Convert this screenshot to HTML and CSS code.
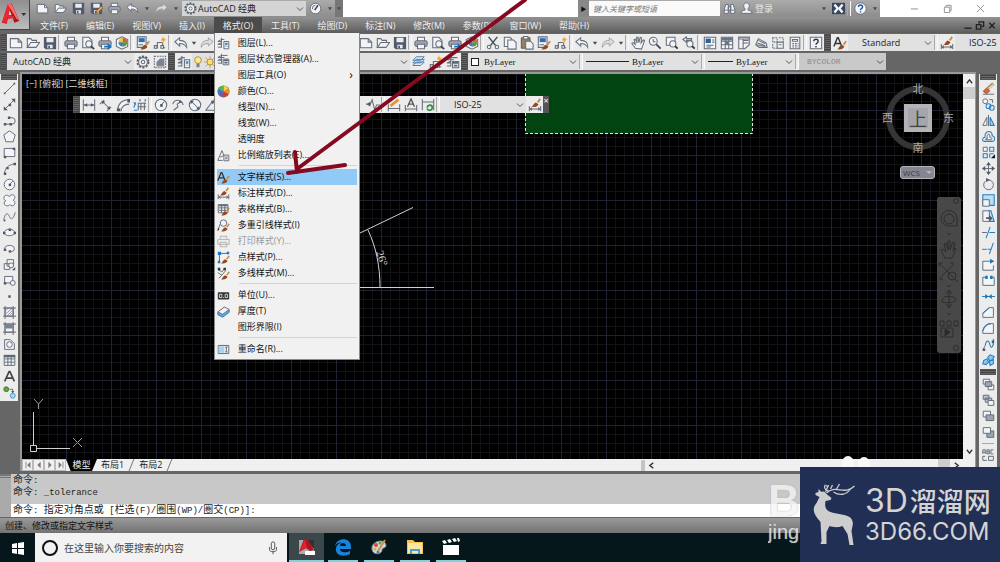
FILE: index.html
```html
<!DOCTYPE html>
<html lang="zh-CN">
<head>
<meta charset="utf-8">
<meta name="viewport" content="width=device-width, initial-scale=1">
<title>AutoCAD 经典</title>
<link rel="stylesheet" href="styles.css">
</head>
<body>
<svg class="sprite" aria-hidden="true">
  <symbol id="new" viewBox="0 0 16 16"><path class="f s" d="M1.500 13.500V3h9l4 4v6.500z"/><path class="s" d="M10.500 3v4h4"/></symbol>
  <symbol id="open" viewBox="0 0 16 16"><path class="f s" d="M1.500 13V3h4l1.500 2h5v2.500"/><path class="f s" d="M1.500 13l4-5.500h10L11.500 13z"/></symbol>
  <symbol id="save" viewBox="0 0 16 16"><path fill="#515b6d" d="M1 1h14v14H3l-2-2z"/><path fill="#e9edf2" d="M4 2h8v5H4zM5 10h6v4H5z"/><path fill="#515b6d" d="M6 11h2v3H6z"/></symbol>
  <symbol id="saveas" viewBox="0 0 16 16"><use href="#save"/><path d="M7 14l1-3 6-6 2 2-6 6z" fill="#f0b35a" stroke="#774619"/></symbol>
  <symbol id="print" viewBox="0 0 16 16"><path class="f s" d="M4 6V1.500h8V6"/><rect class="s" x="1" y="5.500" width="14" height="6.500" rx="2" fill="#9da4af"/><path class="f s" d="M4 9.500h8V14.500H4z"/></symbol>
  <symbol id="preview" viewBox="0 0 16 16"><path class="f s" d="M2 13.500V1.500h7l3.500 3.500v8.500z"/><circle class="f s" cx="9" cy="9" r="3.500"/><path d="M11.500 11.500l3.500 3.500" stroke="#3e4654" stroke-width="2"/></symbol>
  <symbol id="publish" viewBox="0 0 16 16"><use href="#print"/><path fill="#1373c2" d="M7 11h4V8l5 4.500-5 3.500v-3H7z"/></symbol>
  <symbol id="cube" viewBox="0 0 16 16"><path class="f s" d="M1.500 4L8 1l6.500 3v8L8 15l-6.500-3z"/><circle cx="9" cy="7" r="5" fill="#e9c94d"/><path d="M9 7V2a5 5 0 0 1 5 5z" fill="#d95c3c"/><path d="M9 7h5a5 5 0 0 1-5 5z" fill="#4b9b4e"/><path d="M9 7v5a5 5 0 0 1-5-5z" fill="#377fc0"/></symbol>
  <symbol id="match" viewBox="0 0 16 16"><path class="f s" d="M1.500 1h10v12h-10z"/><path fill="#2d6fae" d="M3 2.500h7V7H3z"/><path class="s" d="M3 10h5"/><use href="#brush"/></symbol>
  <symbol id="brush" viewBox="0 0 16 16"><path d="M12 10l3-4" stroke="#c88642" stroke-width="2"/><path d="M5 15c2-.5 2-4 5-5l3 2c-1 3-5 4-8 3z" fill="#944a20"/></symbol>
  <symbol id="block" viewBox="0 0 16 16"><path class="s" d="M1 13.500h4V7.500h6v6h3"/><path class="f s" d="M1.500 11h3v3h-3zM9 11h3v3H9z"/><path fill="#f2a123" d="M12 0L9 5h2.500L10 9l5-6h-3z"/></symbol>
  <symbol id="undo" viewBox="0 0 16 16"><path class="f s" d="M1 6.500L6.500 2v3C12 5 15 8 14.500 13 13 10 10.500 8.500 6.500 8.500v3z"/></symbol>
  <symbol id="redo" viewBox="0 0 16 16"><path fill="#ddd" stroke="#999da3" d="M15 6.500L9.500 2v3C4 5 1 8 1.500 13 3 10 5.500 8.500 9.500 8.500v3z"/></symbol>
  <symbol id="caret" viewBox="0 0 8 16"><path fill="#444b56" d="M1.500 6.500h5L4 10z"/></symbol>
  <symbol id="gear" viewBox="0 0 16 16"><circle cx="8" cy="8" r="6.300" fill="none" stroke="#5a616e" stroke-width="2.200" stroke-dasharray="2.500 1.450"/><circle class="f s" cx="8" cy="8" r="5"/><circle class="s" cx="8" cy="8" r="2"/></symbol>
  <symbol id="gauge" viewBox="0 0 16 16"><circle class="f s" cx="8" cy="8" r="6.500"/><path d="M7 10l4-6" stroke="#424958" stroke-width="2"/><path class="s" d="M4 9l1-4 3-1"/></symbol>
  <symbol id="region" viewBox="0 0 16 16"><path class="s" stroke-dasharray="2 1" d="M1.500 1.500h13v13h-13z"/><path fill="#7b8492" d="M4 8l4-4h5v9H4z"/></symbol>
  <symbol id="cut" viewBox="0 0 16 16"><path d="M3 1l8 10M13 1L5 11" stroke="#4b5363" stroke-width="1.800"/><circle class="s" cx="3.500" cy="12.500" r="2"/><circle class="s" cx="12.500" cy="12.500" r="2"/></symbol>
  <symbol id="copy" viewBox="0 0 16 16"><path class="f s" d="M1.500 12V1.500H8l2 2V12z"/><path class="f s" d="M5.500 15V4.500H12l3 3V15z"/></symbol>
  <symbol id="paste" viewBox="0 0 16 16"><path fill="#958064" stroke="#5a5147" d="M1.500 2h10v12h-10z"/><path class="f s" d="M4 .500h5v3H4zM6.500 6H12l3 3v6H6.500z"/></symbol>
  <symbol id="hand" viewBox="0 0 16 16"><path class="f s" d="M5 14L1 8.500 2.500 7.500 5 9.500 3.500 4 5 3.500 7 8 6.500 1.500H8L9 7.500l1.500-6L12 2l-.5 6L14 4.500l1.500.5-2 6-1.500 4z"/></symbol>
  <symbol id="zoom" viewBox="0 0 16 16"><circle class="f s" cx="6" cy="6" r="4.500"/><path class="s" d="M6 3.500v3h2.500"/><path d="M9.500 9.500l5 5" stroke="#3e4654" stroke-width="2"/></symbol>
  <symbol id="zoomwin" viewBox="0 0 16 16"><path class="f s" d="M1.500 1.500h10v9h-10z"/><circle class="f s" cx="9" cy="9" r="3.500"/><path d="M11.500 11.500l3 3" stroke="#333" stroke-width="2"/></symbol>
  <symbol id="zoomprev" viewBox="0 0 16 16"><path class="f s" d="M1 4l4-3v2h6v2H5v2z"/><circle class="f s" cx="9" cy="9" r="3.500"/><path d="M11.500 11.500l3 3" stroke="#333" stroke-width="2"/></symbol>
  <symbol id="props" viewBox="0 0 16 16"><path class="f s" d="M1.500 1.500h13v13h-13z"/><path fill="#2b6399" d="M3 3h6v5H3z"/><path class="s" d="M10.500 4.500H13M10.500 7H13M4 10.500h8M4 12.500h5"/></symbol>
  <symbol id="grid" viewBox="0 0 16 16"><path class="f s" d="M1.500 1.500h13v13h-13zM6 2v12M10 2v12M2 6h12M2 10h12"/><path fill="#697484" d="M2 2h12v3H2zM6 6h4v4H6z"/></symbol>
  <symbol id="palette" viewBox="0 0 16 16"><path class="f s" d="M2 1.500h12V10L9 14.500H2zM7 2v12M7 5h6M7 8h6"/><path class="f s" d="M2 1.500h12v2H2z"/></symbol>
  <symbol id="sheets" viewBox="0 0 16 16"><path class="f s" d="M2 10l3-7 9 5 1 5H6z"/><path d="M3 10l10 2M4 8l9 3M5 5l8 4" class="s"/></symbol>
  <symbol id="markup" viewBox="0 0 16 16"><path class="s" stroke-dasharray="2 1" d="M2 2h5v5H2zM9 2h5v5M2 9v5h5"/><path class="f s" d="M7 7h7v7H7zM9 10h3"/></symbol>
  <symbol id="calc" viewBox="0 0 16 16"><path class="f s" d="M2.500 1.500h11v13h-11zM5 4h6v2H5z"/><path class="s" stroke-dasharray="2 1" d="M5 8.500h7M5 10.500h7M5 12.500h7"/></symbol>
  <symbol id="help" viewBox="0 0 16 16"><path class="f s" d="M1.500 1.500h13v13h-13z"/><path d="M5.500 6c0-3 5-3 5 0 0 2-2.500 2-2.500 4M8 11.500v1.500" fill="none" stroke="#303743" stroke-width="1.600"/></symbol>
  <symbol id="helpround" viewBox="0 0 16 16"><circle cx="8" cy="8" r="7" fill="#f7f9fc" stroke="#5d6470"/><path d="M5.500 6c0-3 5-3 5 0 0 2-2.500 2-2.500 4M8 11.500v1.500" fill="none" stroke="#1d57a6" stroke-width="1.800"/></symbol>
  <symbol id="textstyle" viewBox="0 0 16 16"><path d="M1 12L5 2h1l4 10M2.500 8.500H8" fill="none" stroke="#333" stroke-width="1.600"/><use href="#brush"/></symbol>
  <symbol id="dimstyle" viewBox="0 0 16 16"><path d="M1.500 9v6M14.500 9v6M2 12.500h12M4.500 11L2 12.500 4.500 14M11.500 11l2.500 1.500L11.500 14" class="s"/><path d="M11 5l3-4" stroke="#c88642" stroke-width="2"/><path d="M4 10c2-.5 2-4 5-5l3 2c-1 3-5 4-8 3z" fill="#944a20"/></symbol>
  <symbol id="layers" viewBox="0 0 16 16"><path class="s" d="M1 5.500L5.500 3H9M1 9l4.500-2M1 12.500h5M5.500 1v12M1 5.500h5M1 9h5"/><path class="f s" d="M8.500 5.500h6v9h-6z"/><path fill="#438ac4" d="M10 7h3v3h-3zM10 11h1v1h-1zM12 11h1v1h-1z"/></symbol>
  <symbol id="layerstate" viewBox="0 0 16 16"><path class="s" d="M1 5.500L5.500 3H13M1 9l4.500-2M1 12.500h5M5.500 1v12M1 5.500h8M1 9h5"/><path class="f s" d="M7.500 7.500h7v7h-7z"/><path fill="#59677a" d="M8 8h6v2H8zM9 11h4v2H9z"/></symbol>
  <symbol id="stack" viewBox="0 0 16 16"><path fill="#dceaf5" stroke="#4175a1" d="M1 12l4-4h9l-4 4zM1 9l4-4h9l-4 4zM1 6l4-4h9l-4 4z"/></symbol>
  <symbol id="bulb" viewBox="0 0 16 16"><circle cx="8" cy="5.500" r="4.500" fill="#ffe78b" stroke="#927b38"/><path fill="#758090" d="M6 10h4v5H6z"/></symbol>
  <symbol id="sun" viewBox="0 0 16 16"><path d="M8 0v16M0 8h16M2 2l12 12M14 2L2 14" stroke="#b4923b"/><circle cx="8" cy="8" r="4" fill="#ffdf67" stroke="#98803b"/></symbol>
  <symbol id="scale" viewBox="0 0 16 16"><path class="f s" d="M1 14L6 2l4 9M1 14h6M4 10l5-2"/><path class="f s" d="M8.500 7.500h6v7h-6z"/><path class="s" d="M10 10h3M10 12h3"/></symbol>
  <symbol id="wheel" viewBox="0 0 16 16"><circle cx="8" cy="8" r="7.500" fill="#777"/><path d="M8 8V1a7 7 0 0 1 6 3.500z" fill="#f3d33c"/><path d="M8 8l6-3.500a7 7 0 0 1 0 7z" fill="#f28b2a"/><path d="M8 8l6 3.500A7 7 0 0 1 8 15z" fill="#cf3c35"/><path d="M8 8v7a7 7 0 0 1-6-3.500z" fill="#884cb0"/><path d="M8 8l-6 3.500a7 7 0 0 1 0-7z" fill="#337ac9"/><path d="M8 8L2 4.500A7 7 0 0 1 8 1z" fill="#5bb548"/></symbol>
  <symbol id="tablestyle" viewBox="0 0 16 16"><path class="f s" d="M1.500 2h12v10h-12zM2 6h12M2 9h12M5.500 3v9M9.500 3v9"/><path fill="#636f80" d="M2 2h11v2H2z"/><use href="#brush"/></symbol>
  <symbol id="leaderstyle" viewBox="0 0 16 16"><path class="s" d="M1 14l3-8"/><path fill="#333" d="M1 15V11l2 1z"/><circle class="f s" cx="8" cy="5" r="4"/><use href="#brush"/></symbol>
  <symbol id="printgray" viewBox="0 0 16 16"><path fill="#eee" stroke="#aaa" d="M4 5V1.500h8V5M1 5.500h14v6H1zM4 9h8v5.500H4z"/></symbol>
  <symbol id="pointstyle" viewBox="0 0 16 16"><path class="s" d="M3 13V3h11"/><path fill="#1d77c5" d="M1 1h4v4H1zM12 1h3v3h-3zM1 12h3v3H1z"/><use href="#brush"/></symbol>
  <symbol id="mlstyle" viewBox="0 0 16 16"><path class="s" d="M1 3l5 3 3-4M1 7l5 3 5-6M2 14l4-4"/><path fill="#333" d="M1 1h3v3H1zM8 1h3v3H8z"/><use href="#brush"/></symbol>
  <symbol id="units" viewBox="0 0 16 16"><rect x="1" y="4" width="14" height="9" rx="1" fill="#343434"/><path fill="none" stroke="#eee" d="M3 6.500h3v4H3zM10 6.500h3v4h-3zM7.500 10.500h1"/></symbol>
  <symbol id="thick" viewBox="0 0 16 16"><path fill="#65aadb" stroke="#266c9f" d="M1 9l8-6 6 3v3l-8 6-6-3z"/><path class="f s" d="M1 8.500L9 2.500l6 3-8 6z"/></symbol>
  <symbol id="rename" viewBox="0 0 16 16"><path class="f s" d="M1.500 3h13v10h-13z"/><path fill="#a7d2f1" d="M2 4h7v8H2z"/><path class="s" d="M10 5h3M10 11h3M11.500 5v6"/></symbol>
  <symbol id="line" viewBox="0 0 16 16"><path class="s" d="M2 14L14 2"/><path class="d" d="M1 13h2v2H1zM13 1h2v2h-2z"/></symbol>
  <symbol id="xline" viewBox="0 0 16 16"><path class="s" d="M1 15L15 1"/><path class="d" d="M1 15v-5l5 5zM15 1h-5l5 5zM7 7h3v3H7z"/></symbol>
  <symbol id="pline" viewBox="0 0 16 16"><path class="s" d="M2 12.500h9a4 4 0 0 0 0-8H8"/><path class="d" d="M1 11h3v3H1zM6 3h3v3H6zM8 11h3v3H8z"/></symbol>
  <symbol id="polygon" viewBox="0 0 16 16"><path class="f s" d="M8 1l7 5-2.500 8.500h-9L1 6z"/></symbol>
  <symbol id="rect" viewBox="0 0 16 16"><path class="f s" d="M1.500 3h13v10h-13z"/><path class="d" d="M1 12h3v3H1zM12 2h3v3h-3z"/></symbol>
  <symbol id="arc" viewBox="0 0 16 16"><path class="s" d="M2 14C2 8 7 3 14 2.500"/><path class="d" d="M1 13h3v3H1zM13 1h3v3h-3zM4 6h3v3H4z"/></symbol>
  <symbol id="circle" viewBox="0 0 16 16"><circle class="f s" cx="8" cy="8" r="6.500"/><path class="s" d="M8 8l4-4"/><path class="d" d="M7 7h3v3H7z"/></symbol>
  <symbol id="cloud" viewBox="0 0 16 16"><path class="f s" d="M8 3.500C9-.5 15 .5 14.500 4.500 14.500 6 13.500 7 12.500 7.500 16 9 15 14.500 11.500 14.500 10 14.500 9 14 8.500 13 6.500 16 1 14.500 1.500 11 1.500 9.500 2.500 8.500 3.500 8.500 0 7 .5 1.500 4.500 1.500 6 1.500 7.500 2.500 8 3.500z"/></symbol>
  <symbol id="spline" viewBox="0 0 16 16"><path class="s" d="M1 13c1-10 5-10 7-5s5 3 7-5"/><path class="d" d="M1 12h2v2H1z"/></symbol>
  <symbol id="ellipse" viewBox="0 0 16 16"><ellipse class="f s" cx="8" cy="8" rx="6.500" ry="4"/><path class="d" d="M0 7h3v3H0zM13 7h3v3h-3zM7 3h3v3H7z"/></symbol>
  <symbol id="ellarc" viewBox="0 0 16 16"><path class="f s" d="M2 8c0-5 12-5 12 0 0 3-2 4-6 4"/><path class="d" d="M1 8h3v3H1zM7 10h3v3H7z"/></symbol>
  <symbol id="insert" viewBox="0 0 16 16"><path class="f s" d="M5 2h8v8H5zM1.500 7h7v7h-7z"/><circle class="f s" cx="10" cy="9" r="3"/><path class="d" d="M11 15h4v-4z"/></symbol>
  <symbol id="makeblock" viewBox="0 0 16 16"><path class="f s" d="M2 3h10v8H2z"/><circle class="f s" cx="12" cy="11" r="3"/><path class="d" d="M1 10h3v3H1z"/></symbol>
  <symbol id="dot" viewBox="0 0 16 16"><path class="d" d="M6.500 6.500h3v3h-3z"/></symbol>
  <symbol id="hatch" viewBox="0 0 16 16"><path class="f s" d="M2.500 2.500h10v10h-10zM0 2.500h16M0 12.500h16M2.500 0v16M12.500 0v16"/><path stroke="#798490" d="M3 6l4-4M3 10l9-8M5 12l8-8M8 12l4-4"/></symbol>
  <symbol id="gradient" viewBox="0 0 16 16"><path class="f s" d="M2.500 2.500h10v10h-10zM0 2.500h16M0 12.500h16M2.500 0v16M12.500 0v16"/><path fill="#78838e" d="M3 3h9v5H3z"/></symbol>
  <symbol id="regionshape" viewBox="0 0 16 16"><path class="f s" d="M2 14V2h7l5 5v7z"/><circle class="f s" cx="8" cy="8" r="3.500"/></symbol>
  <symbol id="table" viewBox="0 0 16 16"><path class="f s" d="M1.500 2h13v12h-13zM2 6h12M2 10h12M6 3v11M10 3v11"/><path fill="#5d6877" d="M1 1h14v3H1z"/></symbol>
  <symbol id="mtext" viewBox="0 0 16 16"><path d="M2 14L7.500 2h1L14 14M4.500 10h7" fill="none" stroke="#444" stroke-width="2"/></symbol>
  <symbol id="addsel" viewBox="0 0 16 16"><circle cx="4" cy="4" r="3" fill="#65a63d" stroke="#376c21"/><circle cx="12" cy="12" r="3" fill="#a4d9fa" stroke="#328bcb"/><path class="s" d="M8 4h4v4"/><path class="d" d="M10 6h4l-2 3z"/></symbol>
  <symbol id="dlin" viewBox="0 0 16 16"><path class="s" d="M1.500 1.500v13M14.500 1.500v13M2 8h12"/><path class="d" d="M2 8l4-2v4zM14 8l-4-2v4z"/></symbol>
  <symbol id="dali" viewBox="0 0 16 16"><path class="s" d="M1 7l5-5M9 15l5-5M4 4l8 8"/><path class="d" d="M3 3l4 1-3 3zM13 13l-4-1 3-3z"/></symbol>
  <symbol id="darc" viewBox="0 0 16 16"><path class="f s" d="M2 14C2 7 7 2 14 2M6 15c0-5 4-8 9-8"/><path class="d" d="M1 12h4v3H1zM13 1h3v4h-3z"/></symbol>
  <symbol id="dord" viewBox="0 0 16 16"><path class="s" d="M6 14V6h9M9 6v8M6 10h9M13 5v9"/><path class="b" d="M1 14h4M8 1v3M14 1v3M1 5l2 3M3 5l-2 6"/></symbol>
  <symbol id="djog" viewBox="0 0 16 16"><path class="s" d="M2 7c2-6 10-6 12 1M3 14l5-4-1-3 4-3"/><path class="d" d="M10 2l3 3-4 1z"/></symbol>
  <symbol id="ddia" viewBox="0 0 16 16"><circle class="f s" cx="8" cy="8" r="6.500"/><path class="s" d="M4 4l8 8"/><path class="d" d="M3 3h4L3 7zM13 13H9l4-4z"/></symbol>
  <symbol id="dang" viewBox="0 0 16 16"><path class="s" d="M14 14H1L10 2M8 4c4 2 5 5 5 9"/><path class="d" d="M7 3l4 1-3 3z"/></symbol>
  <symbol id="dbreak" viewBox="0 0 16 16"><path class="s" d="M0 7h5l2-5 3 12 2-6h4"/><path class="d" d="M1 7l4-3v6z"/></symbol>
  <symbol id="dedit" viewBox="0 0 16 16"><path class="s" d="M1.500 7v8M14.500 7v8M2 12h12"/><path d="M4 9l9-7" stroke="#e09531" stroke-width="3"/></symbol>
  <symbol id="dtext" viewBox="0 0 16 16"><path class="s" d="M1.500 8v7M14.500 8v7M2 12.500h12"/><path d="M4 10l4-9 4 9M5.500 7h5" fill="none" stroke="#555" stroke-width="1.500"/></symbol>
  <symbol id="dupd" viewBox="0 0 16 16"><path class="s" d="M1.500 1v13M14.500 1v13M2 4.500h12"/><path d="M7 11c1-4 6-4 6 0-1 4-5 4-6 1" fill="none" stroke="#358e43" stroke-width="2"/></symbol>
  <symbol id="erase" viewBox="0 0 16 16"><path d="M7 8l7-6" stroke="#b08a5c" stroke-width="4"/><path d="M8 8l6-5" stroke="#efdcc0" stroke-width="1.500"/><path d="M1.500 11.500l4-4 4 3.500-4 3.500z" fill="#e0633a" stroke="#913e29"/><path class="s" d="M1 15h14"/></symbol>
  <symbol id="copyobj" viewBox="0 0 16 16"><circle class="f s" cx="4" cy="4" r="3"/><circle cx="8" cy="10" r="3" class="b"/><circle cx="12" cy="12" r="3" class="b"/><path class="s" d="M9 2h4v4"/></symbol>
  <symbol id="mirror" viewBox="0 0 16 16"><path class="f s" d="M1 14L6 4v10zM8 1v14"/><path fill="#a6d3f1" class="bs" d="M15 14L10 4v10z"/></symbol>
  <symbol id="offset" viewBox="0 0 16 16"><path class="b" d="M2.500 14C0 14 0 9.500 3.500 9 3.500-.5 13 0 12.500 7c4 .5 4 7 .5 7z"/><path class="f s" d="M4.500 12c-.5-1.500.5-2 2-1.500C5 4 10.500 3 9.500 9c2.500-.5 3.500 2.500 2 3z"/></symbol>
  <symbol id="array" viewBox="0 0 16 16"><path class="f s" d="M1.500 1.500h5v5h-5z"/><path class="b" d="M9.500 1.500h5v5h-5zM1.500 9.500h5v5h-5zM9.500 9.500h5M9.500 9.500v5"/><path fill="#111" d="M11 15h5v-5z"/></symbol>
  <symbol id="move" viewBox="0 0 16 16"><path class="s" d="M8 1v14M1 8h14"/><path class="d" d="M5 4l3-4 3 4zM5 12l3 4 3-4zM4 5L0 8l4 3zM12 5l4 3-4 3z"/></symbol>
  <symbol id="rotate" viewBox="0 0 16 16"><path class="s" stroke-width="1.800" d="M9 2.500A6 6 0 1 1 4 4"/><path class="d" d="M5 0l5 2.500L5 5z"/></symbol>
  <symbol id="scaleobj" viewBox="0 0 16 16"><path fill="#b9def5" class="bs" d="M1 1h14v13H1z"/><path class="f s" d="M1 7h8v8H1z"/></symbol>
  <symbol id="stretch" viewBox="0 0 16 16"><path fill="#b9def5" class="bs" d="M8 1h3l4 13H8z"/><path class="f s" d="M1 1h8v13H1z"/><path class="d" d="M5 9h4V6l4 4-4 4v-3H5z"/></symbol>
  <symbol id="trim" viewBox="0 0 16 16"><path class="s" d="M0 8h6"/><path class="b" d="M9 8h7M5 15l5-14"/></symbol>
  <symbol id="extend" viewBox="0 0 16 16"><path class="s" d="M0 9h6"/><path class="b" d="M7 9h4M9 15l5-14"/></symbol>
  <symbol id="breakpt" viewBox="0 0 16 16"><path class="f s" d="M14 4H1v11h13V9"/><path fill="#1675bd" d="M10 1l5 3-5 3z"/></symbol>
  <symbol id="break" viewBox="0 0 16 16"><path class="f s" d="M6 4H1v10h14V4h-5"/><path fill="#1675bd" d="M4 2h3v4H4zM10 2h3v4h-3z"/></symbol>
  <symbol id="join" viewBox="0 0 16 16"><path class="b" d="M0 8h16"/><path fill="#1675bd" d="M4 5l4 3-4 3zM12 5L8 8l4 3z"/></symbol>
  <symbol id="chamfer" viewBox="0 0 16 16"><path class="f s" d="M1 14V9l8-7h5v12z"/><path class="b" d="M1 9l8-7"/></symbol>
  <symbol id="fillet" viewBox="0 0 16 16"><path class="f s" d="M1 14v-3C2 6 6 2 11 2h3v12z"/><path class="b" d="M1 11C2 6 6 2 11 2"/></symbol>
  <symbol id="blend" viewBox="0 0 16 16"><path class="s" d="M1 15l3-6M14 8V1"/><path class="b" d="M4 9c2-9 5-5 6 0s4 1 4-3"/><path class="d" d="M1 13h3v3H1zM12 3h3v3h-3z"/></symbol>
  <symbol id="explode" viewBox="0 0 16 16"><path fill="#8ec9ed" class="bs" d="M2 8l4-2 2 4-3 3-4-1zM7 4l3-3 5 2-2 4-4 1zM9 9l5-2v5l-4 2z"/></symbol>
  <symbol id="order" viewBox="0 0 16 16"><path class="f s" d="M1.500 1.500h8v6h-8zM7.500 8.500h7v6h-7z"/><path fill="#9aa4b0" class="s" d="M4 4.500h8v6H4z"/></symbol>
  <symbol id="order2" viewBox="0 0 16 16"><path fill="#bbc2ca" class="s" d="M1.500 1.500h7v5h-7zM4 5h8v5H4z"/><path class="f s" d="M7.500 8h7v6h-7z"/></symbol>
  <symbol id="above" viewBox="0 0 16 16"><path class="f s" d="M1.500 1.500h9v7h-9z"/><path fill="#9aa4b0" class="s" d="M5 6h9.500v7H5z"/></symbol>
  <symbol id="below" viewBox="0 0 16 16"><path fill="#9aa4b0" class="s" d="M6 6h8.500v8H6z"/><path class="f s" d="M1.500 2h9v7h-9z"/></symbol>
  <symbol id="abc" viewBox="0 0 16 16"><path class="s" d="M1 6V1h3v5M1 4h3M6 6V1h3v5zM6 3.500h3M14 1h-3v5h3M4 9H1v5h5M8 9h6v5H8z"/></symbol>
  <symbol id="person" viewBox="0 0 16 16"><path class="s" fill="#eef1f5" d="M1 14c1-3 3-4 5-4V8C3 5 5 1 8 1s5 4 2 7v2c2 0 4 1 5 4z"/></symbol>
  <symbol id="bino" viewBox="0 0 16 16"><path class="f s" d="M1.500 14V9l2-6h3v11zM9.500 14V3h3l2 6v5zM6.500 6h3v4h-3zM2 10h4M10 10h4"/></symbol>
  <symbol id="exchange" viewBox="0 0 16 16"><path fill="#39445a" d="M0 1h16v14H0z"/><path d="M3 3l4 5-4 5M13 3L9 8l4 5" fill="none" stroke="#eef3ff" stroke-width="3"/></symbol>
</svg>

<div class="app">
  <header class="header">
    <button class="appbtn" aria-label="应用程序菜单"><svg viewBox="0 0 30 29"><path fill="#a51518" d="M2 23l6-18 4-2 8 18-5 2-2-5-5 1-1 5z"/><path fill="#ed2530" d="M2 23L8 4h4L8 17l-1 6zM8 15l6 1 2 5-3-3-5 1z"/><path fill="#ff6a68" d="M8 4h4l8 17-3-2z"/><path fill="#ddd" d="M10 10l2 5H9z"/><path fill="#333" d="M22 13h5l-2.500 3z"/></svg></button>
    <div class="headrows">
      <div class="titlebar">
        <div class="quick">
          <button aria-label="新建"><svg><use href="#new"/></svg></button><button aria-label="打开"><svg><use href="#open"/></svg></button><button aria-label="保存"><svg><use href="#save"/></svg></button><button aria-label="另存为"><svg><use href="#saveas"/></svg></button><button aria-label="打印"><svg><use href="#print"/></svg></button><button aria-label="放弃"><svg><use href="#undo"/></svg></button><button class="car" aria-label="放弃列表"><svg><use href="#caret"/></svg></button><button aria-label="重做"><svg><use href="#redo"/></svg></button><button class="car" aria-label="重做列表"><svg><use href="#caret"/></svg></button>
          <label class="space"><svg><use href="#gear"/></svg><select aria-label="工作空间"><option>AutoCAD 经典</option></select></label>
          <button aria-label="性能"><svg><use href="#gauge"/></svg></button><button class="car" aria-label="更多"><svg><use href="#caret"/></svg></button><button class="car dark" aria-label="自定义"><svg><use href="#caret"/></svg></button>
        </div>
        <div class="blank"></div>
        <div class="info">
          <button class="play" aria-label="展开搜索">▶</button><input type="text" aria-label="搜索帮助" placeholder="键入关键字或短语">
          <button aria-label="搜索"><svg><use href="#bino"/></svg></button><button class="login"><svg><use href="#person"/></svg>登录</button><button class="car" aria-label="登录选项"><svg><use href="#caret"/></svg></button><button aria-label="Exchange"><svg><use href="#exchange"/></svg></button><i class="vs"></i><button aria-label="帮助"><svg><use href="#helpround"/></svg></button><button class="car" aria-label="帮助选项"><svg><use href="#caret"/></svg></button>
        </div>
        <div class="winctl">
          <button aria-label="最小化"><svg viewBox="0 0 10 10"><path d="M1 5.500h8"/></svg></button><button aria-label="还原"><svg viewBox="0 0 10 10"><path d="M1.500 3.500h6v6h-6zM3.500 3V1.500h5.500v6H7.500"/></svg></button><button aria-label="关闭"><svg viewBox="0 0 10 10"><path d="M1 1l8 8M9 1L1 9"/></svg></button>
        </div>
      </div>
      <nav class="menubar">
        <button>文件(F)</button><button>编辑(E)</button><button>视图(V)</button><button>插入(I)</button>
        <div class="menuwrap"><button class="on" aria-expanded="true">格式(O)</button>
          <div class="menu" role="menu">
            <button role="menuitem"><svg><use href="#layers"/></svg>图层(L)...</button>
            <button role="menuitem"><svg><use href="#layerstate"/></svg>图层状态管理器(A)...</button>
            <button role="menuitem"><svg></svg>图层工具(O)<span class="sub">›</span></button>
            <button role="menuitem"><svg><use href="#wheel"/></svg>颜色(C)...</button>
            <button role="menuitem"><svg></svg>线型(N)...</button>
            <button role="menuitem"><svg></svg>线宽(W)...</button>
            <button role="menuitem"><svg></svg>透明度</button>
            <button role="menuitem"><svg><use href="#scale"/></svg>比例缩放列表(E)...</button>
            <hr>
            <button role="menuitem" class="hot"><svg><use href="#textstyle"/></svg>文字样式(S)...</button>
            <button role="menuitem"><svg><use href="#dimstyle"/></svg>标注样式(D)...</button>
            <button role="menuitem"><svg><use href="#tablestyle"/></svg>表格样式(B)...</button>
            <button role="menuitem"><svg><use href="#leaderstyle"/></svg>多重引线样式(I)</button>
            <button role="menuitem" disabled><svg><use href="#printgray"/></svg>打印样式(Y)...</button>
            <button role="menuitem"><svg><use href="#pointstyle"/></svg>点样式(P)...</button>
            <button role="menuitem"><svg><use href="#mlstyle"/></svg>多线样式(M)...</button>
            <hr>
            <button role="menuitem"><svg><use href="#units"/></svg>单位(U)...</button>
            <button role="menuitem"><svg><use href="#thick"/></svg>厚度(T)</button>
            <button role="menuitem"><svg></svg>图形界限(I)</button>
            <hr>
            <button role="menuitem"><svg><use href="#rename"/></svg>重命名(R)...</button>
          </div>
        </div>
        <button>工具(T)</button><button>绘图(D)</button><button>标注(N)</button><button>修改(M)</button><button>参数(P)</button><button>窗口(W)</button><button>帮助(H)</button>
        <div class="docctl"><button aria-label="最小化文档"><svg viewBox="0 0 10 10"><path d="M1 8h8"/></svg></button><button aria-label="还原文档"><svg viewBox="0 0 10 10"><path d="M1 4h5v5H1zM4 3V1h5v5H7"/></svg></button><button aria-label="关闭文档"><svg viewBox="0 0 10 10"><path d="M2 2l6 6M8 2L2 8"/></svg></button></div>
      </nav>
    </div>
  </header>

  <div class="bars">
    <div class="row">
      <div class="tb first">
        <i class="grip"></i><button aria-label="新建"><svg><use href="#new"/></svg></button><button aria-label="打开"><svg><use href="#open"/></svg></button><button aria-label="保存"><svg><use href="#save"/></svg></button><i class="vs"></i><button aria-label="打印"><svg><use href="#print"/></svg></button><button aria-label="预览"><svg><use href="#preview"/></svg></button><button aria-label="发布"><svg><use href="#publish"/></svg></button><button aria-label="三维打印"><svg><use href="#cube"/></svg></button><i class="vs"></i><button aria-label="特性匹配"><svg><use href="#match"/></svg></button><button aria-label="块编辑"><svg><use href="#block"/></svg></button><i class="vs"></i><button aria-label="放弃"><svg><use href="#undo"/></svg></button><button class="car" aria-label="放弃列表"><svg><use href="#caret"/></svg></button><button aria-label="重做"><svg><use href="#redo"/></svg></button>
      </div>
      <div class="tb">
        <i class="grip"></i><button aria-label="新建"><svg><use href="#new"/></svg></button><button aria-label="打开"><svg><use href="#open"/></svg></button><button aria-label="保存"><svg><use href="#save"/></svg></button><i class="vs"></i><button aria-label="打印"><svg><use href="#print"/></svg></button><button aria-label="预览"><svg><use href="#preview"/></svg></button><button aria-label="发布"><svg><use href="#publish"/></svg></button><button aria-label="三维打印"><svg><use href="#cube"/></svg></button><i class="vs"></i><button aria-label="剪切"><svg><use href="#cut"/></svg></button><button aria-label="复制"><svg><use href="#copy"/></svg></button><button aria-label="粘贴"><svg><use href="#paste"/></svg></button><button aria-label="特性匹配"><svg><use href="#match"/></svg></button><button aria-label="块编辑"><svg><use href="#block"/></svg></button><i class="vs"></i><button aria-label="放弃"><svg><use href="#undo"/></svg></button><button class="car" aria-label="放弃列表"><svg><use href="#caret"/></svg></button><button aria-label="重做"><svg><use href="#redo"/></svg></button><button class="car" aria-label="重做列表"><svg><use href="#caret"/></svg></button><i class="vs"></i><button aria-label="平移"><svg><use href="#hand"/></svg></button><button aria-label="缩放"><svg><use href="#zoom"/></svg></button><button aria-label="窗口缩放"><svg><use href="#zoomwin"/></svg></button><button aria-label="上一个"><svg><use href="#zoomprev"/></svg></button><i class="vs"></i><button aria-label="特性"><svg><use href="#props"/></svg></button><button aria-label="设计中心"><svg><use href="#grid"/></svg></button><button aria-label="工具选项板"><svg><use href="#palette"/></svg></button><button aria-label="图纸集"><svg><use href="#sheets"/></svg></button><button aria-label="标记集"><svg><use href="#markup"/></svg></button><button aria-label="计算器"><svg><use href="#calc"/></svg></button><i class="vs"></i><button aria-label="帮助"><svg><use href="#help"/></svg></button>
      </div>
      <div class="tb grow">
        <i class="grip"></i><button aria-label="文字样式"><svg><use href="#textstyle"/></svg></button><select class="wide" aria-label="文字样式"><option>Standard</option></select><i class="vs"></i><button aria-label="标注样式"><svg><use href="#dimstyle"/></svg></button><select class="wide" aria-label="标注样式"><option>ISO-25</option></select>
      </div>
    </div>
    <div class="row">
      <div class="tb"><i class="grip"></i><select class="ws" aria-label="工作空间"><option>AutoCAD 经典</option></select><button aria-label="设置"><svg><use href="#gear"/></svg></button><button aria-label="我的工作空间"><svg><use href="#region"/></svg></button></div>
      <div class="tb"><i class="grip"></i><button aria-label="图层特性"><svg><use href="#layers"/></svg></button><label class="layer"><svg><use href="#bulb"/></svg><svg><use href="#sun"/></svg><select aria-label="图层"><option>0</option></select></label><button aria-label="置为当前"><svg><use href="#stack"/></svg></button><button aria-label="上一个图层"><svg><use href="#block"/></svg></button><button aria-label="图层状态"><svg><use href="#layerstate"/></svg></button></div>
      <div class="tb props"><i class="grip"></i><label class="by c1"><i class="sw"></i><select aria-label="颜色"><option>ByLayer</option></select></label><i class="vs"></i><label class="by c2"><i class="ln"></i><select aria-label="线型"><option>ByLayer</option></select></label><i class="vs"></i><label class="by c3"><i class="ln"></i><select aria-label="线宽"><option>ByLayer</option></select></label><i class="vs"></i><label class="by c4"><select aria-label="打印样式" disabled><option>BYCOLOR</option></select></label></div>
    </div>
  </div>

  <main class="work">
    <div class="vtb"><i class="grip"></i><button aria-label="直线"><svg><use href="#line"/></svg></button><button aria-label="构造线"><svg><use href="#xline"/></svg></button><button aria-label="多段线"><svg><use href="#pline"/></svg></button><button aria-label="多边形"><svg><use href="#polygon"/></svg></button><button aria-label="矩形"><svg><use href="#rect"/></svg></button><button aria-label="圆弧"><svg><use href="#arc"/></svg></button><button aria-label="圆"><svg><use href="#circle"/></svg></button><button aria-label="修订云线"><svg><use href="#cloud"/></svg></button><button aria-label="样条曲线"><svg><use href="#spline"/></svg></button><button aria-label="椭圆"><svg><use href="#ellipse"/></svg></button><button aria-label="椭圆弧"><svg><use href="#ellarc"/></svg></button><button aria-label="插入块"><svg><use href="#insert"/></svg></button><button aria-label="创建块"><svg><use href="#makeblock"/></svg></button><button aria-label="点"><svg><use href="#dot"/></svg></button><button aria-label="图案填充"><svg><use href="#hatch"/></svg></button><button aria-label="渐变色"><svg><use href="#gradient"/></svg></button><button aria-label="面域"><svg><use href="#regionshape"/></svg></button><button aria-label="表格"><svg><use href="#table"/></svg></button><button aria-label="多行文字"><svg><use href="#mtext"/></svg></button><button aria-label="添加选定对象"><svg><use href="#addsel"/></svg></button></div>
    <section class="frame">
      <div class="canvas">
        <svg class="draw" aria-hidden="true"><rect x="503.500" y="-4" width="227" height="63.500" fill="#014311" stroke="#dcebdc" stroke-dasharray="3 2"/><g fill="none" stroke="#d0d0d0"><path d="M337 159.500l54-26M337 213.500h75M346 156c8 17 12 36 12 57"/><path d="M11.500 338v34M14 374.500h34M8.500 371.500h6v6h-6z"/></g><path fill="none" stroke="#999" d="M12 325l4.500 5 4.500-5M16.500 330v5M51 364l9 9M60 364l-9 9"/><text class="ang" transform="translate(354 178) rotate(72)">26°</text></svg>
        <div class="vlabel">[−] [俯视] [二维线框]</div>
        <div class="tb float"><i class="grip"></i><button aria-label="线性"><svg><use href="#dlin"/></svg></button><button aria-label="对齐"><svg><use href="#dali"/></svg></button><button aria-label="弧长"><svg><use href="#darc"/></svg></button><button aria-label="坐标"><svg><use href="#dord"/></svg></button><i class="vs"></i><button aria-label="半径"><svg><use href="#circle"/></svg></button><button aria-label="折弯"><svg><use href="#djog"/></svg></button><button aria-label="直径"><svg><use href="#ddia"/></svg></button><button aria-label="角度"><svg><use href="#dang"/></svg></button><span class="pad"></span><button aria-label="折弯线性"><svg><use href="#dbreak"/></svg></button><i class="vs"></i><button aria-label="编辑标注"><svg><use href="#dedit"/></svg></button><button aria-label="编辑标注文字"><svg><use href="#dtext"/></svg></button><button aria-label="标注更新"><svg><use href="#dupd"/></svg></button><i class="vs"></i><select class="wide" aria-label="标注样式控制"><option>ISO-25</option></select><button aria-label="标注样式"><svg><use href="#dimstyle"/></svg></button><button class="cls" aria-label="关闭">×</button></div>
        <div class="viewcube"><span class="n">北</span><span class="w">西</span><button>上</button><span class="e">东</span><span class="so">南</span></div>
        <button class="wcs">WCS<span></span></button>
        <div class="navbar"><svg viewBox="0 0 24 155"><circle cx="19" cy="4" r="2.500"/><path d="M4 22a8 8 0 0 1 16-1v8h-8a8 8 0 0 1-8-7z"/><circle cx="12" cy="22" r="5"/><path d="M10 36l2 2 2-2M8 61l-4-8 2-1 3 3-2-8 2-1 2 7 0-9h2l0 9 3-8 2 1-2 8 2-3 1 1-4 9zM3 67l14 14M17 67L3 81M2 66h4M2 66v4M17 66h-4M2 82h4"/><circle cx="15" cy="79" r="4"/><path d="M18 82l3 3M10 88l2 2 2-2M4 104a8 3 0 1 0 3-4M12 94v16M9 97l3-4 3 4M9 107l3 4 3-4M4 104l3-3M10 116l2 2 2-2M3 124h4v5H3zM10 124h4v5h-4zM17 124h4v5h-4zM4 131h12v9H4z"/><path class="solid" d="M8 132l5 3-5 4z"/><circle cx="19" cy="151" r="2.500"/></svg></div>
      </div>
      <div class="vscroll"><button aria-label="向上"><svg viewBox="0 0 8 8"><path d="M1 6l3-4 3 4"/></svg></button><i class="thumb"></i><span></span><button aria-label="向下"><svg viewBox="0 0 8 8"><path d="M1 2l3 4 3-4"/></svg></button></div>
      <div class="tabs">
        <div class="tnav"><button aria-label="第一个"><svg viewBox="0 0 10 10"><path d="M2 1h1v8H2zM8 1v8L4 5z"/></svg></button><button aria-label="上一个"><svg viewBox="0 0 10 10"><path d="M7 1v8L3 5z"/></svg></button><button aria-label="下一个"><svg viewBox="0 0 10 10"><path d="M3 1v8l4-4z"/></svg></button><button aria-label="最后一个"><svg viewBox="0 0 10 10"><path d="M7 1h1v8H7zM2 1v8l4-4z"/></svg></button></div>
        <button class="tab act">模型</button><button class="tab">布局1</button><i class="slash"></i><button class="tab">布局2</button><i class="slash"></i>
        <div class="hscroll"><i class="split"></i><button aria-label="向左"><svg viewBox="0 0 8 8"><path d="M6 1L2 4l4 3"/></svg></button><span></span><i class="thumb"></i><button aria-label="向右"><svg viewBox="0 0 8 8"><path d="M2 1l4 3-4 3"/></svg></button></div>
      </div>
    </section>
    <div class="vtb right"><i class="grip"></i><button aria-label="删除"><svg><use href="#erase"/></svg></button><button aria-label="复制"><svg><use href="#copyobj"/></svg></button><button aria-label="镜像"><svg><use href="#mirror"/></svg></button><button aria-label="偏移"><svg><use href="#offset"/></svg></button><button aria-label="阵列"><svg><use href="#array"/></svg></button><button aria-label="移动"><svg><use href="#move"/></svg></button><button aria-label="旋转"><svg><use href="#rotate"/></svg></button><button aria-label="缩放"><svg><use href="#scaleobj"/></svg></button><button aria-label="拉伸"><svg><use href="#stretch"/></svg></button><button aria-label="修剪"><svg><use href="#trim"/></svg></button><button aria-label="延伸"><svg><use href="#extend"/></svg></button><button aria-label="打断于点"><svg><use href="#breakpt"/></svg></button><button aria-label="打断"><svg><use href="#break"/></svg></button><button aria-label="合并"><svg><use href="#join"/></svg></button><button aria-label="倒角"><svg><use href="#chamfer"/></svg></button><button aria-label="圆角"><svg><use href="#fillet"/></svg></button><button aria-label="光顺曲线"><svg><use href="#blend"/></svg></button><button aria-label="分解"><svg><use href="#explode"/></svg></button><i class="grip mid"></i><button aria-label="前置"><svg><use href="#order"/></svg></button><button aria-label="后置"><svg><use href="#order2"/></svg></button><button aria-label="置于对象之上"><svg><use href="#above"/></svg></button><button aria-label="置于对象之下"><svg><use href="#below"/></svg></button><i class="hs"></i><button aria-label="注释前置"><svg><use href="#abc"/></svg></button></div>
  </main>

  <section class="command">
    <i class="cgrip"></i>
    <div class="cbody">
      <div class="hist"><p><span class="zh">命令</span>:</p><p><span class="zh">命令</span>: _tolerance</p></div>
      <p class="prompt"><span class="zh">命令</span>: <span class="zh">指定对角点或</span> [<span class="zh">栏选</span>(F)/<span class="zh">圈围</span>(WP)/<span class="zh">圈交</span>(CP)]:</p>
    </div>
  </section>
  <div class="status">创建、修改或指定文字样式</div>

  <footer class="taskbar">
    <button class="start" aria-label="开始"><svg viewBox="0 0 14 14"><path fill="#fff" d="M1 3l5-1v5H1zM7 2l6-1v6H7zM1 8h5v5l-5-1zM7 8h6v6l-6-1z"/></svg></button>
    <label class="search"><i class="ring"></i><input type="text" aria-label="搜索" placeholder="在这里输入你要搜索的内容"><svg viewBox="0 0 10 16"><rect x="3" y="1" width="4" height="9" rx="2"/><path d="M1 7v3c0 3 8 3 8 0V7M5 12v3"/></svg></label>
    <button class="task cur" aria-label="AutoCAD"><svg viewBox="0 0 18 18"><path fill="#aaa" d="M1 2h15v14H1z"/><path fill="#333" d="M8 2h8v9z"/><path fill="#b31420" d="M1 14L6 1l4 1 6 10-4 1-4-3z"/><path fill="#e2222e" d="M2 13L7 1l2 9z"/><path fill="#fff" d="M7 13h10v4H7z"/></svg></button>
    <button class="task" aria-label="Edge"><svg viewBox="0 0 18 18"><path fill="#1683df" d="M1 8C3-1 17-1 17 9v2H6c0 4 6 4 10 2v3C8 20 1 16 2 11c0-4 3-6 6-6-5-1-6 2-7 3zM6 8h6c0-4-6-4-6 0z"/></svg></button>
    <button class="task" aria-label="画图"><svg viewBox="0 0 18 18"><path fill="#c8dbe4" stroke="#758c97" d="M2 9c2-7 13-8 14-2 0 4-4 2-4 5 0 5-11 6-10-3z"/><circle cx="6" cy="7" r="2" fill="#d3483c"/><circle cx="10" cy="5" r="1.500" fill="#54a63d"/><circle cx="5" cy="11" r="1.500" fill="#eba735"/><circle cx="8" cy="14" r="1.500" fill="#367fbc"/><path d="M8 13l7-11" stroke="#d98b42" stroke-width="2"/></svg></button>
    <button class="task" aria-label="文件资源管理器"><svg viewBox="0 0 18 18"><path fill="#f2c450" d="M1 2h6l2 2h8v12H1z"/><path fill="#ffe6a0" d="M2 5h14v10H2z"/><path fill="#38a5df" d="M4 16v-5h10v5h-2v-3H6v3z"/></svg></button>
    <button class="task" aria-label="视频"><svg viewBox="0 0 18 18"><path fill="#fff" d="M1 7h16v10H1zM0 3l3-1 2 3-3 1zM5 2l3-1 2 3-3 1zM10 1l3-1 2 3-3 1zM15 0h2l1 3-2 1z"/></svg></button>
  </footer>
  <div class="wm" aria-hidden="true"><b>B</b><span>jing</span></div>
  <svg class="paw" viewBox="0 0 30 16" aria-hidden="true"><ellipse cx="7" cy="9" rx="6" ry="8"/><ellipse cx="23" cy="10" rx="6" ry="8"/></svg>
  <aside class="brand">
    <svg viewBox="0 0 44 60" aria-hidden="true"><path d="M3 8l3-1V4l3 3c2-1 4 0 5 2l5 4-1 2-5 1c-1 6 0 9 5 11 6 2 14 2 19 5 3 2 4 6 3 9l-1 5 2 14h-4l-2-11-5-8c-5 2-10 1-13 0l-3 6v12H8l1-3-1-19C1 29-1 24 4 18l3-6-4-2z"/><path class="horn" d="M13 7l3-7M16 2l-4-2M14 8c9-9 18 3 28-7M18 4l2-4M24 4l3-5M21 7c6 4 13 3 17-3M16 6c-4-1-4-3-4-5"/></svg>
    <div class="bt"><div class="b1"><span>3D</span><strong>溜溜网</strong></div><div class="b2">3D66.COM</div></div>
  </aside>
  <svg class="arrow" viewBox="0 0 1000 562" aria-hidden="true"><path d="M525 0L297 169M295 152l2 20M288 173l57-8"/></svg>
</div>
</body>
</html>
```

FILE: styles.css
```css
* { box-sizing: border-box; }
body { margin: 0; overflow: hidden; background: #666; color: #222; font: 9px/16px "Open Sans", "Noto Sans CJK SC", sans-serif; }
button, input, select { margin: 0; padding: 0; border: 0; border-radius: 0; background: none; color: inherit; font: inherit; }
p { margin: 0; }
i { display: block; flex: none; }
svg { display: block; flex: none; }
.sprite { position: absolute; width: 0; height: 0; }
.f { fill: #f2f4f7; }
.s { stroke: #666e7b; stroke-width: 1.2; }
.s:not(.f):not([fill]), .b { fill: none; }
.b, .bs { stroke: #267fc4; stroke-width: 1.3; }
.d { fill: #505866; }
select { appearance: none; height: 17px; padding: 0 14px 0 6px; background: #e1e1e1 url("data:image/svg+xml,%3Csvg xmlns='http://www.w3.org/2000/svg' width='8' height='8'%3E%3Cpath d='M1 2.500l3 3 3-3' fill='none' stroke='%23555'/%3E%3C/svg%3E") no-repeat right 2px center; }
.app { position: relative; display: flex; flex-direction: column; min-height: 100vh; }

.header { display: flex; background: linear-gradient(#9b9b9b, #646464); }
.appbtn { width: 30px; height: 30px; border: solid #444; border-width: 0 1px 1px 0; background: linear-gradient(#8f8f8f, #bcbcbc); }
.appbtn svg { width: 29px; height: 29px; }
.headrows { flex: 1; min-width: 0; }
.titlebar { display: flex; height: 17px; background: #fff; }
.quick, .info { display: flex; align-items: center; background: linear-gradient(#ababab, #8d8d8d); }
.quick { padding-left: 3px; }
.quick > button, .info > button { display: flex; justify-content: center; align-items: center; width: 18px; height: 17px; }
.quick svg, .info svg { width: 13px; height: 13px; }
.quick > .car, .info > .car { width: 8px; margin: 0 1px 0 2px; }
.quick > .car svg, .info > .car svg { width: 8px; }
.quick > .dark { width: 8px; margin: 0; background: #777; }
.space { display: flex; align-items: center; height: 15px; margin: 0 0 0 1px; padding-left: 2px; background: #d4d4d4; }
.space select { width: 109px; height: 15px; padding-left: 1px; background-color: #d4d4d4; }
.blank { flex: 1; }
.info > .play { width: 11px; font-size: 6px; color: #111; background: #888; }
.info input { width: 131px; height: 15px; padding-left: 4px; background: #fafafa; font-style: italic; font-size: 8px; }
.info input::placeholder { color: #777; opacity: 1; }
.info > .login { width: 80px; justify-content: flex-start; gap: 2px; padding-left: 2px; color: #e9e9e9; }
.winctl { display: flex; width: 120px; padding-left: 18px; }
.winctl button { display: flex; justify-content: center; align-items: center; width: 33px; }
.winctl svg { width: 9px; height: 9px; fill: none; stroke: #888; }
.menubar { display: flex; height: 16px; padding-left: 1px; color: #eee; background: linear-gradient(#929292, #5d5d5d); }
.menubar > button, .menuwrap > button { height: 16px; padding: 0 9px; line-height: 15px; white-space: nowrap; }
.menuwrap { position: relative; }
.menuwrap > .on { background: #4b4b4b; }
.docctl { display: flex; align-items: center; gap: 2px; margin-left: auto; padding-right: 3px; }
.docctl svg { width: 10px; height: 9px; fill: none; stroke: #222; stroke-width: 1.5; }
.menu { position: absolute; z-index: 10; top: 16px; left: 0; width: 146px; padding: 2px; border: solid #888; border-width: 0 1px 1px; background: #f1f1f1; color: #111; }
.menu button { display: flex; align-items: center; gap: 8px; width: 100%; height: 16px; line-height: 16px; white-space: nowrap; }
.menu svg { width: 13px; height: 13px; }
.menu .hot { background: #91c9f7; }
.menu button:disabled { color: #999; }
.menu .sub { margin-left: auto; padding-right: 4px; font-size: 12px; }
.menu hr { height: 1px; margin: 2px 0 3px 22px; border: 0; background: #d4d4d4; }

.bars { padding: 1px 0 2px; background: #666; }
.row { display: flex; height: 17px; }
.row + .row { margin-top: 2px; }
.tb { display: flex; flex: none; align-items: center; height: 17px; background: #ececec; }
.tb > button { display: flex; flex: none; justify-content: center; align-items: center; width: 17px; height: 17px; }
.tb > button svg { width: 14px; height: 14px; }
.tb > .car { width: 9px; }
.tb > .car svg { width: 8px; }
.first { width: 350px; }
.tb.grow { flex: 1 1 0; min-width: 0; overflow: hidden; }
.grip { width: 7px; height: 17px; border: 1px solid #555; background: repeating-linear-gradient(#444 0 1px, #666 1px 2px); }
.vs { width: 4px; height: 15px; border-left: 1px solid #aaa; border-right: 1px solid #fafafa; }
.tb .wide { flex: none; width: 86px; padding-left: 14px; }
.tb .ws { width: 127px; }
.layer { display: flex; align-items: center; width: 218px; background: #e1e1e1; }
.layer svg { width: 12px; height: 12px; }
.layer select { flex: 1; }
.props { margin-right: auto; }
.by { display: flex; align-items: center; gap: 2px; padding-left: 3px; background: #e1e1e1; font-family: "Liberation Serif", serif; color: #111; text-shadow: 0 0 0 #111; }
.by select { flex: 1; min-width: 0; padding-left: 1px; }
.sw { width: 8px; height: 8px; border: 1px solid #222; background: #fff; }
.ln { width: 43px; height: 1px; background: #222; }
.c1 { width: 111px; }
.c1 .sw { margin-right: 2px; }
.c2 { width: 118px; }
.c3 { width: 90px; }
.c3 .ln { width: 25px; }
.c4 { width: 87px; background: #c9c9c9; font-family: "Liberation Mono", monospace; font-size: 8px; text-shadow: none; }
.c4 select { padding-left: 5px; color: #888; background-color: #c9c9c9; opacity: 1; }

.work { display: flex; flex: 1; background: #666; }
.vtb { width: 18px; flex: none; align-self: flex-start; margin-top: 2px; padding: 0 1px 1px; background: #ececec; }
.vtb > .grip { width: 16px; height: 6px; }
.vtb > button { display: flex; justify-content: center; align-items: center; width: 16px; height: 16px; }
.vtb svg { width: 13px; height: 13px; }
.right { margin: 2px 3px 0; height: 397px; overflow: hidden; }
.right .mid { margin: 1px 0; }
.hs { height: 1px; margin: 3px 2px; background: #aaa; }
.frame { flex: 1; min-width: 0; display: grid; grid-template: 1fr 12px / 1fr 12px; margin: 0 0 3px 2px; border: solid #999; border-width: 2px 1px 0 2px; background: #eee; }
.canvas { position: relative; overflow: hidden; background-color: #000; background-image: linear-gradient(90deg, #1e2231 1px, transparent 1px), linear-gradient(#1e2231 1px, transparent 1px), linear-gradient(90deg, #111218 1px, transparent 1px), linear-gradient(#111218 1px, transparent 1px); background-size: 45px 45px, 45px 45px, 9px 9px, 9px 9px; background-position: 44px 36px; }
.draw { position: absolute; inset: 0; width: 100%; height: 100%; }
.ang { fill: #ddd; font: 11px "Liberation Serif", serif; }
.vlabel { position: absolute; top: 2px; left: 4px; color: #ddd; }
.float { position: absolute; top: 22px; left: 51px; }
.float .pad { width: 144px; }
.float > .cls { align-items: flex-start; width: 6px; background: #555; color: #fff; line-height: 9px; }
.viewcube { position: absolute; top: 12px; right: 13px; display: grid; place-items: center; width: 64px; height: 64px; border: 6px solid #353535; border-radius: 50%; color: #aaa; font-size: 11px; }
.viewcube button { width: 28px; height: 28px; background: #a4a6ab; border: 4px solid #b4b4b4; color: #444; font: 18px/18px "Noto Sans CJK SC", sans-serif; }
.viewcube span { position: absolute; }
.n { top: -11px; }
.so { bottom: -12px; }
.w { left: -10px; }
.e { right: -10px; }
.wcs { position: absolute; top: 92px; right: 28px; display: flex; align-items: center; gap: 6px; width: 35px; height: 13px; padding-left: 2px; border: 1px solid #b5b5be; border-radius: 3px; background: #858590; color: #383843; font-size: 8px; }
.wcs span { border: 3px solid transparent; border-top-color: #b5b5be; border-bottom: 0; }
.navbar { position: absolute; top: 123px; right: 2px; width: 24px; height: 156px; border-radius: 3px; background: #484848; }
.navbar svg { width: 24px; height: 155px; fill: none; stroke: #2c2c2c; }
.navbar .solid { fill: #2c2c2c; }
.vscroll { display: flex; flex-direction: column; align-items: center; padding: 2px 0; background: #f0f0f0; }
.vscroll button, .hscroll button { display: flex; align-items: center; justify-content: center; width: 12px; height: 11px; }
.vscroll svg, .hscroll svg { width: 7px; height: 7px; fill: none; stroke: #333; stroke-width: 1.5; }
.vscroll .thumb, .hscroll .thumb { width: 12px; height: 12px; background: #cdcdcd; }
.vscroll span, .hscroll span { flex: 1; }
.tabs { grid-column: 1 / -1; display: flex; align-items: center; height: 12px; background: #f0f0f0; }
.tnav { display: flex; }
.tnav button { width: 11px; height: 12px; border: 1px solid #bbb; }
.tnav svg { width: 8px; height: 8px; margin: auto; fill: #777; }
.tab { height: 12px; padding: 0 4px; line-height: 12px; }
.act { width: 31px; background: #000; color: #eee; clip-path: polygon(0 0, 100% 0, 84% 100%, 15% 100%); }
.slash { width: 1px; height: 12px; margin: 0 3px; background: #777; transform: skewX(-22deg); }
.hscroll { display: flex; align-items: center; width: 334px; margin-left: auto; padding-right: 13px; }
.hscroll .split { width: 4px; height: 11px; background: #c4c4c4; }

.command { display: flex; height: 43px; background: #c8c8c8; font: 9px/11px "Liberation Mono", "Noto Sans CJK SC", monospace; color: #222; }
.zh { font-size: 10px; }
.cgrip { width: 11px; background: linear-gradient(#777 2px, transparent 2px 3px, #777 3px 4px, transparent 4px), #aaa; }
.cbody { flex: 1; display: flex; flex-direction: column; justify-content: space-between; }
.hist { padding: 1px 2px; }
.prompt { height: 13px; padding: 1px 2px; background: #fff; }
.status { height: 16px; padding-left: 5px; border-top: 1px solid #666; background: linear-gradient(#999, #737373); color: #111; line-height: 15px; }
.taskbar { display: flex; height: 29px; background: #05171b; }
.start { width: 35px; }
.start svg { width: 14px; height: 14px; margin: auto; }
.search { display: flex; align-items: center; gap: 6px; width: 252px; padding: 0 9px 0 7px; background: #f2f2f2; }
.ring { width: 16px; height: 16px; border: 2px solid #111; border-radius: 50%; }
.search input { flex: 1; min-width: 0; font-size: 10px; }
.search input::placeholder { color: #444; opacity: 1; }
.search svg { width: 10px; height: 14px; fill: none; stroke: #444; }
.task { width: 30px; margin: 0 3px; border-bottom: 2px solid #7fd3df; }
.task svg { width: 18px; height: 18px; margin: auto; }
.cur { width: 35px; margin: 0 1px 0 2px; background: #3b474b; }

.wm { position: absolute; right: 200px; bottom: 18px; display: flex; flex-direction: column; width: 32px; overflow: hidden; color: #f4f4f4; opacity: .8; font-family: "Liberation Sans", sans-serif; text-shadow: 0 0 1px #888; }
.wm b { font-size: 44px; line-height: 38px; }
.wm span { font-size: 20px; line-height: 24px; }
.paw { position: absolute; right: 129px; bottom: 91px; width: 30px; height: 16px; fill: #f8f8f8; }
.brand { position: absolute; right: 0; bottom: 0; display: flex; align-items: center; gap: 8px; width: 200px; height: 95px; padding-left: 12px; background: #212f54; color: #d4d4d4; }
.brand > svg { width: 45px; height: 60px; overflow: visible; fill: #cdcdcd; }
.brand .horn { fill: none; stroke: #cdcdcd; stroke-width: 1.3; }
.b1 { display: flex; align-items: center; gap: 2px; height: 34px; line-height: 34px; font-family: "Inter", sans-serif; }
.b1 span { font-size: 32px; }
.b1 strong { font: 500 27px/30px "Noto Sans CJK SC", sans-serif; }
.b2 { font: 24px/28px "Inter", sans-serif; }
.arrow { position: absolute; z-index: 20; top: 0; left: 0; width: 1000px; height: 562px; fill: none; stroke: #850a20; stroke-width: 4; stroke-linecap: round; pointer-events: none; }
```
